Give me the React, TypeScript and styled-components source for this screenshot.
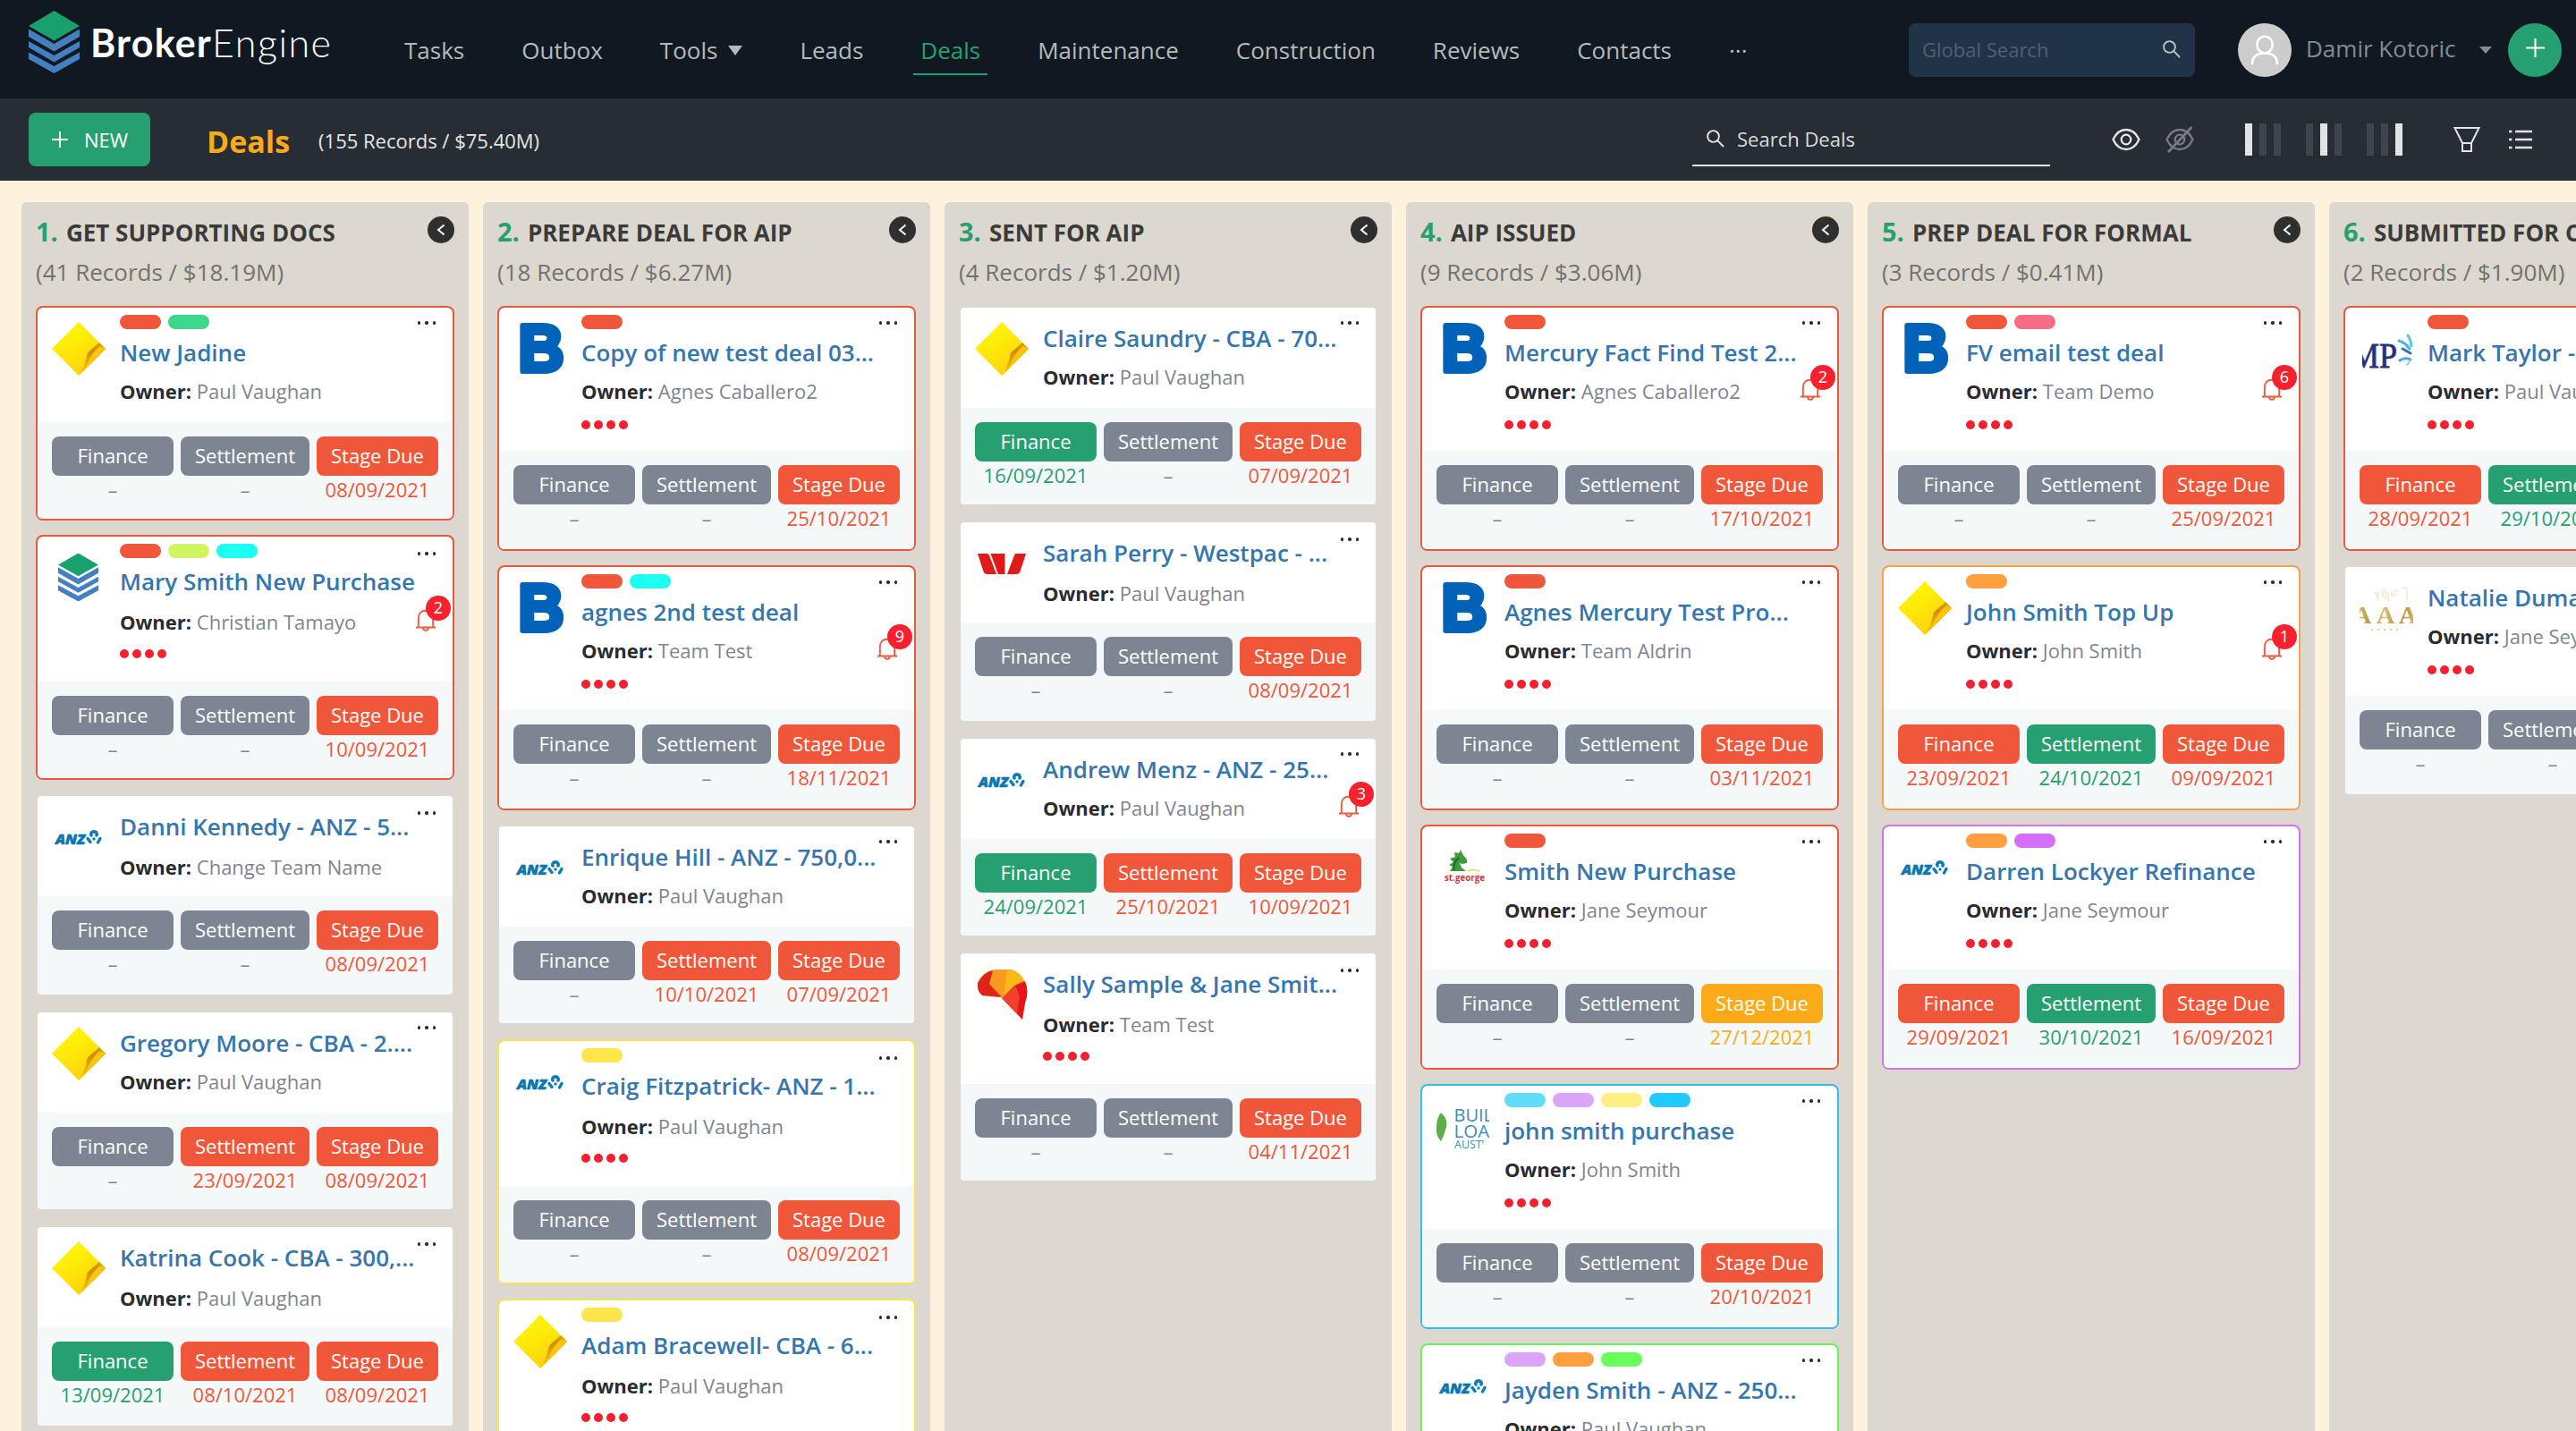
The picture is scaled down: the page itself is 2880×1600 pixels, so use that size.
import React from 'react';
import styled, { createGlobalStyle } from 'styled-components';

const C = {
  red: '#f0573a', green: '#26a071', gray: '#7d8592', amber: '#fbab18',
  mint: '#3dd788', lime: '#cff560', cyan: '#1afff2', sky: '#62dcfb', mauve: '#dca4f4',
  lemon: '#ffee80', blue: '#20caff', orange: '#ff9f3f', leaf: '#6afc5b', purple: '#d56ef8',
  pink: '#f66e85', yellow: '#ffe54c',
};

const Global = createGlobalStyle`
  * { box-sizing: border-box; }
  html, body { margin: 0; padding: 0; overflow: hidden; }
  body { font-family: "Open Sans", "Noto Sans", sans-serif; background: #fdf3dc; }
`;

const Page = styled.div`
  width: 2880px; height: 1600px; overflow: hidden;
  display: flex; flex-direction: column; background: #fdf3dc;
`;

/* ---------- top bar ---------- */
const TopBar = styled.header`
  flex: none; height: 110px; background: #101921; display: flex; align-items: flex-start; padding: 0 16px 0 32px;
`;
const Brand = styled.div`
  display: flex; width: 412px; padding-top: 12px; gap: 12px;
`;
const BrandName = styled.div`
  font-family: Lato, sans-serif; font-size: 43px; line-height: 50px; color: #fff; font-weight: 300;
  padding-top: 11px; letter-spacing: 1.5px; white-space: nowrap;
  b { font-weight: 700; letter-spacing: 1.2px; }
`;
const Nav = styled.nav`display: flex; align-items: flex-start; gap: 48px; padding-top: 38px; flex: 1;`;
const NavItem = styled.a<{ $active?: boolean }>`
  display: flex; align-items: center; gap: 12px; padding: 0 8px 8px;
  font-size: 26px; line-height: 36px;
  color: ${p => (p.$active ? C.green : '#b5b9bc')};
  border-bottom: 2px solid ${p => (p.$active ? C.green : 'transparent')};
`;
const Caret = styled.i<{ $small?: boolean }>`
  width: 0; height: 0; border-style: solid;
  border-width: ${p => (p.$small ? '8px 7px 0' : '11px 8px 0')};
  border-color: ${p => (p.$small ? '#858b90' : '#b5b9bc')} transparent transparent;
`;
const Right = styled.div`display: flex; align-items: center; padding-top: 26px;`;
const GlobalSearch = styled.div`
  width: 320px; height: 60px; border-radius: 8px; background: #203347; color: #52616f;
  display: flex; align-items: center; justify-content: space-between; padding: 0 16px 2px 15px; font-size: 22px;
`;
const Avatar = styled.div`
  width: 60px; height: 60px; border-radius: 50%; background: #ccc; margin-left: 48px;
  display: flex; align-items: center; justify-content: center;
`;
const UserName = styled.span`
  font-size: 26px; color: #858b90; margin: 0 24px 4px 16px; width: 170px; white-space: nowrap; line-height: 36px;
`;
const RoundAdd = styled.button`
  width: 60px; height: 60px; border-radius: 50%; background: ${C.green}; border: 0; padding: 0 0 6px; margin-left: 18px;
  display: flex; align-items: center; justify-content: center;
`;

/* ---------- toolbar ---------- */
const Toolbar = styled.div`
  flex: none; height: 92px; background: #272d34; display: flex; align-items: center; padding: 0 48px 0 32px;
`;
const NewButton = styled.button`
  width: 136px; height: 60px; border: 0; border-radius: 8px; background: ${C.green}; color: #fff;
  display: flex; align-items: center; gap: 18px; padding: 0 0 0 26px; font: 400 22px "Open Sans", sans-serif;
`;
const Title = styled.h1`margin: 0 0 0 63px; font-size: 34px; line-height: 46px; font-weight: 700; color: ${C.amber}; padding-top: 3px;`;
const Totals = styled.span`font-size: 22px; color: #e4e6e8; margin-left: 32px; padding-top: 2px; flex: 1;`;
const DealSearch = styled.div`
  width: 400px; height: 60px; border-bottom: 2px solid #e3e9ea; color: #d9dcde; font-size: 22px;
  display: flex; align-items: center; gap: 14px; padding: 0 0 0 16px;
`;
const Tools = styled.div`display: flex; align-items: center; margin-left: 69px;`;
const Bars = styled.div`display: flex; gap: 8px; margin-left: 28px; &:first-of-type { margin-left: 57px; }`;
const Bar = styled.i<{ $on: boolean }>`width: 8px; height: 36px; background: ${p => (p.$on ? '#dfe5e4' : '#3f454c')};`;
const IconGap = styled.span<{ $w: number }>`width: ${p => p.$w}px;`;

/* ---------- board ---------- */
const Board = styled.main`
  flex: 1; min-height: 0; display: flex; gap: 16px; padding: 24px 0 0 24px; overflow: hidden;
`;
const Column = styled.section`
  flex: none; width: 500px; background: #dcd8d0; border-radius: 6px 6px 0 0; padding: 16px 16px 0;
  display: flex; flex-direction: column;
`;
const ColumnHead = styled.div`display: flex; flex: none; justify-content: space-between; height: 40px;`;
const ColumnTitle = styled.h2`
  margin: -1px 0 0; font-size: 26px; font-weight: 700; color: #3b3b3a; line-height: 36px; white-space: nowrap;
  em { font-style: normal; font-size: 29px; color: ${C.green}; margin-right: 9px; }
`;
const Collapse = styled.button`
  flex: none; width: 30px; height: 30px; border-radius: 50%; border: 0; padding: 0; background: #2f2f2f;
  display: flex; align-items: center; justify-content: center;
`;
const ColumnSub = styled.div`flex: none; font-size: 26px; line-height: 36px; color: #72726f; height: 60px; padding-top: 4px; white-space: nowrap;`;
const Cards = styled.div`display: flex; flex-direction: column; gap: 16px;`;

const Card = styled.article<{ $edge?: string }>`
  flex: none; position: relative; border: 2px solid ${p => p.$edge || 'transparent'}; border-radius: ${p => (p.$edge ? 8 : 6)}px;
  background: #fff; background-clip: padding-box;
`;
const CardBody = styled.div<{ $tagged: boolean; $pb: number }>`
  display: flex; padding: ${p => (p.$tagged ? 8 : 15)}px 0 ${p => p.$pb}px 16px;
`;
const LogoBox = styled.div<{ $tagged: boolean }>`
  width: 60px; height: 60px; margin: ${p => (p.$tagged ? 8 : 1)}px 16px 0 0; flex: none;
  svg { display: block; }
`;
const Info = styled.div`flex: 1; min-width: 0; display: flex; flex-direction: column;`;
const Tags = styled.div`display: flex; gap: 8px; margin-bottom: 7px;`;
const Tag = styled.span<{ $c: string }>`width: 46px; height: 16px; border-radius: 8px; background: ${p => p.$c};`;
const DealName = styled.a`font-size: 26px; font-weight: 600; height: 36px; line-height: 38px; color: #3376b0; white-space: nowrap;`;
const OwnerRow = styled.div<{ $low?: boolean }>`
  margin: ${p => (p.$low ? '12px 0 -2px' : '10px 0 0')}; height: 32px; line-height: 32px; font-size: 22px; color: #7e8591;
  display: flex; justify-content: space-between; white-space: nowrap;
  b { color: #2b2b2b; font-weight: 700; }
`;
const Bell = styled.div`position: relative; width: 22px; height: 32px; margin-right: 19px; padding-top: 1px;`;
const Badge = styled.span`
  position: absolute; left: 11px; top: -13px; width: 28px; height: 28px; border-radius: 50%; background: #f5212f; color: #fff;
  font-size: 18px; line-height: 27px; text-align: center;
`;
const Dots = styled.div`
  display: flex; gap: 4px; margin-top: 17px;
  i { width: 10px; height: 10px; border-radius: 50%; background: #f4202d; }
`;
const Menu = styled.div<{ $low?: boolean }>`
  position: absolute; right: 19px; top: ${p => (p.$low ? 17 : 15)}px; display: flex; gap: 5px;
  i { width: 3.5px; height: 3.5px; border-radius: 50%; background: #2a2a2a; }
`;
const CardFoot = styled.div<{ $pb: number }>`
  background: #f5f8f9; display: flex; gap: 8px; padding: 16px 16px ${p => p.$pb}px; border-radius: 0 0 5px 5px;
`;
const Milestone = styled.div<{ $w: number }>`width: ${p => p.$w}px; text-align: center; font-size: 22px;`;
const Pill = styled.div<{ $c: string }>`height: 44px; line-height: 43px; border-radius: 8px; color: #fff; background: ${p => p.$c};`;
const DateText = styled.div<{ $c: string }>`height: 32px; line-height: 30px; color: ${p => p.$c};`;

/* ---------- icons ---------- */
const Search = ({ c, s = 20 }: { c: string; s?: number }) => (
  <svg width={s} height={s} viewBox="0 0 20 20" fill="none" stroke={c} strokeWidth="1.900"><circle cx="7.5" cy="7.5" r="6.400" /><path d="M12.200 12.200 19 19" /></svg>
);
const Plus = ({ s }: { s: number }) => (
  <svg width={s} height={s} viewBox="0 0 20 20" stroke="#fff" strokeWidth="2"><path d="M10 0V20M0 10H20" /></svg>
);
const Eye = ({ off }: { off?: boolean }) => (
  <svg width="32" height="32" viewBox="0 0 32 32" fill="none" stroke={off ? '#767c82' : '#e3e7ea'} strokeWidth="2.3">
    <path d="M1.5 16C5 8.500 10 5 16 5s11 3.500 14.500 11C27 23.500 22 27 16 27S5 23.500 1.500 16Z" />
    <circle cx="16" cy="16" r="5.3" />
    {off && <path d="M29.500 2 3 30" strokeWidth="2.800" />}
  </svg>
);
const BellIcon = () => (
  <svg width="22" height="26" viewBox="0 0 22 26" fill="none" stroke="#ee5a3c" strokeWidth="1.900">
    <path d="M0 21.500H22M2.800 21.500V11C2.800 5.500 6 2.800 11 2.800S19.200 5.500 19.200 11V21.500M8 21.500C8 26 14 26 14 21.500" />
  </svg>
);

/* ---------- lender logos ---------- */
const Stack = ({ w, h }: { w: number; h: number }) => (
  <svg width={w} height={h} viewBox="0 0 57 70" preserveAspectRatio="none">
    <path d="M28.500 0 57 17 28.500 33.500 0 17Z" fill="#18a06d" />
    <g fill="#4480bf">
      <path d="M0 20.500 28.500 37 57 20.500V29L28.500 45.500 0 29Z" />
      <path d="M0 34 28.500 50 57 34V41L28.500 57.500 0 41Z" />
      <path d="M0 46.500 28.500 62 57 46.500V54L28.500 70 0 54Z" />
    </g>
  </svg>
);
const Cba = () => (
  <svg width="60" height="60" viewBox="0 0 60 60">
    <defs>
      <linearGradient id="cbaA" x1="0" y1="0" x2="0.6" y2="1"><stop offset="0" stopColor="#fff700" /><stop offset=".4" stopColor="#ffee08" /><stop offset="1" stopColor="#ffd00e" /></linearGradient>
      <linearGradient id="cbaB" x1="0" y1="1" x2="1" y2="0"><stop offset="0" stopColor="#ffd000" /><stop offset=".6" stopColor="#d08c00" /><stop offset="1" stopColor="#e0a000" /></linearGradient>
    </defs>
    <path d="M30 0 60 30 30 60 0 30Z" fill="url(#cbaA)" />
    <path d="M53 23 60 30 30 60C36 52 37 46 39 38 40 33 42 33 53 23Z" fill="url(#cbaB)" />
    <path d="M54 27 60 30 35 55C42 45 40 39 54 27Z" fill="#fdc60c" />
  </svg>
);
const Bank = () => (
  <svg width="60" height="60" viewBox="0 0 60 60" overflow="visible">
    <text x="5.500" y="55" fontFamily="Liberation Sans, Arial, sans-serif" fontWeight="700" fontSize="74" textLength="51" lengthAdjust="spacingAndGlyphs" fill="#0062b9" stroke="#0062b9" strokeWidth="6" strokeLinejoin="round">B</text>
  </svg>
);
const Anz = () => (
  <svg width="60" height="60" viewBox="0 0 60 60">
    <text x="4" y="38" fontFamily="Open Sans, sans-serif" fontWeight="800" fontStyle="italic" fontSize="16" textLength="33" lengthAdjust="spacingAndGlyphs" fill="#0a76b2" stroke="#0a76b2" strokeWidth=".6">ANZ</text>
    <g fill="none" stroke="#0a7cb8" strokeLinecap="round">
      <path d="M44 28C42 22.500 52 22.500 50 28" strokeWidth="3.600" /><path d="M40 31.500 43 35.500M54 31.500 51.500 36" strokeWidth="3.400" />
    </g>
    <circle cx="47" cy="32" r="1.700" fill="#0a7cb8" />
  </svg>
);
const Westpac = () => (
  <svg width="60" height="60" viewBox="0 0 60 60" fill="#e01a18">
    <path d="M3 19H13Q15 19 16 21L24 42H14Q10.500 42 9.500 39Z" /><path d="M17.500 19H33.500V42H26Z" /><path d="M57 19H46Q44.500 19 44 21L36 42H46Q49.500 42 50.500 39Z" />
  </svg>
);
const Fan = () => (
  <svg width="60" height="60" viewBox="0 0 60 60">
    <path d="M3 17Q9 3 24 2H40Q50 4 56 16L44 20 30 33 8 31Q2 26 3 17Z" fill="#f79a1e" />
    <path d="M3 17Q10 5 20 3L16 18 30 33 8 31Q2 26 3 17Z" fill="#e2231a" />
    <path d="M36 2Q50 3 55 14L44 20 32 32 Z" fill="#fdb81a" />
    <path d="M56 15Q61 26 56 40L53 58 30 34 44 20Z" fill="#e4161b" />
    <path d="M30 34 45 20 50 32 47 51Z" fill="#f4402a" />
  </svg>
);
const StGeorge = () => (
  <svg width="60" height="60" viewBox="0 0 60 60">
    <path d="M15 34 18 29 14 27 19 24 15 20 21 18 20 13 25 14 27 10 29 15 34 21 34 25 29 26 26 25 28 30 33 34Z" fill="#3f9a3a" />
    <path d="M20 33Q18 24 25 19" stroke="#1f5e2a" strokeWidth="1.600" fill="none" />
    <path d="M35 34Q41 31 48 34" stroke="#f3d23c" strokeWidth="1.600" fill="none" />
    <text x="9" y="45" fontFamily="Open Sans, sans-serif" fontWeight="700" fontSize="11" textLength="45" lengthAdjust="spacingAndGlyphs" fill="#d9323c">st.george</text>
  </svg>
);
const BuildLoans = () => (
  <svg width="59" height="60" viewBox="0 0 59 60" fill="#3d8db8" fontFamily="Open Sans, sans-serif">
    <path d="M5 14Q13 21 11 30 9 38 5 46-1 40 0 30 0 20 5 14Z" fill="#5fae4b" />
    <text x="19.500" y="23.500" fontSize="20">BUIL</text>
    <text x="19.500" y="41.500" fontSize="20.500">LOA</text>
    <text x="20" y="54" fontSize="12.500">AUST’</text>
  </svg>
);
const Mp = () => (
  <svg width="60" height="60" viewBox="0 0 60 60">
    <text x="-10" y="51" fontFamily="Liberation Serif, serif" fontSize="40" fill="#27307a" stroke="#27307a" strokeWidth=".8" textLength="52" lengthAdjust="spacingAndGlyphs">MP</text>
    <path d="M-1 20H3L3 52H-1Z" fill="#fff" />
    <g fill="none" strokeWidth="3" strokeLinecap="round">
      <path d="M58 27Q57 19 54 15" stroke="#5fc4e8" /><path d="M56 30Q51 23 44 21" stroke="#49b3e6" />
      <path d="M57 35Q52 32 48 30" stroke="#2f6fc0" /><path d="M45 43Q50 39 57 42" stroke="#49a9dc" /><path d="M53 48 57 43" stroke="#7fd0ee" strokeWidth="2" />
    </g>
  </svg>
);
const Aaa = () => (
  <svg width="60" height="60" viewBox="0 0 60 60">
    <defs><linearGradient id="gold" x1="0" x2="1"><stop offset="0" stopColor="#e6cf8e" /><stop offset=".3" stopColor="#b08a2c" /><stop offset=".5" stopColor="#dcc27a" /><stop offset=".7" stopColor="#a8801f" /><stop offset="1" stopColor="#dcc27a" /></linearGradient></defs>
    <path d="M16 14 19 12V20M21 22V12H23M26 8V18M29 8V20M32 12V22M36 10V16H40V10H44M47 7H53V20" stroke="#ecdcb6" strokeWidth="1" fill="none" />
    <text y="47" fontFamily="Liberation Serif, serif" fontSize="28" fontWeight="700" fill="url(#gold)"><tspan x="-7">A</tspan><tspan x="19">A</tspan><tspan x="44">A</tspan></text>
    <path d="M13 54H48" stroke="#e3d2a4" strokeWidth="2" strokeDasharray="2 5" />
  </svg>
);
const StackLogo = () => (
  <svg width="60" height="60" viewBox="0 0 60 60"><svg x="7" y="2.500" width="45" height="54"><Stack w={45} h={54} /></svg></svg>
);
const logos: Record<string, () => React.JSX.Element> = {
  cba: Cba, bank: Bank, anz: Anz, westpac: Westpac, fan: Fan, george: StGeorge, build: BuildLoans, mp: Mp, aaa: Aaa, stack: StackLogo,
};

/* ---------- data ---------- */
type Stage = [string, string] | null;
interface Deal {
  logo: string; name: string; owner: string; tags?: string[]; edge?: string; dots?: boolean; low?: boolean; alerts?: number;
  stages: [Stage, Stage, Stage];
}
const r = (d: string): Stage => [C.red, d];
const g = (d: string): Stage => [C.green, d];
const E = { red: '#e8583f', yellow: '#f7e258', blue: '#31c0ea', leaf: '#69f25c', orange: '#f9a146', purple: '#cf73ee' };

const columns: { title: string; sub: string; deals: Deal[] }[] = [
  { title: 'GET SUPPORTING DOCS', sub: '(41 Records / $18.19M)', deals: [
    { logo: 'cba', name: 'New Jadine', owner: 'Paul Vaughan', tags: [C.red, C.mint], edge: E.red, stages: [null, null, r('08/09/2021')] },
    { logo: 'stack', name: 'Mary Smith New Purchase', owner: 'Christian Tamayo', tags: [C.red, C.lime, C.cyan], edge: E.red, dots: true, low: true, alerts: 2, stages: [null, null, r('10/09/2021')] },
    { logo: 'anz', name: 'Danni Kennedy - ANZ - 5...', owner: 'Change Team Name', low: true, stages: [null, null, r('08/09/2021')] },
    { logo: 'cba', name: 'Gregory Moore - CBA - 2....', owner: 'Paul Vaughan', stages: [null, r('23/09/2021'), r('08/09/2021')] },
    { logo: 'cba', name: 'Katrina Cook - CBA - 300,...', owner: 'Paul Vaughan', low: true, stages: [g('13/09/2021'), r('08/10/2021'), r('08/09/2021')] },
  ] },
  { title: 'PREPARE DEAL FOR AIP', sub: '(18 Records / $6.27M)', deals: [
    { logo: 'bank', name: 'Copy of new test deal 03...', owner: 'Agnes Caballero2', tags: [C.red], edge: E.red, dots: true, stages: [null, null, r('25/10/2021')] },
    { logo: 'bank', name: 'agnes 2nd test deal', owner: 'Team Test', tags: [C.red, C.cyan], edge: E.red, dots: true, alerts: 9, stages: [null, null, r('18/11/2021')] },
    { logo: 'anz', name: 'Enrique Hill - ANZ - 750,0...', owner: 'Paul Vaughan', stages: [null, r('10/10/2021'), r('07/09/2021')] },
    { logo: 'anz', name: 'Craig Fitzpatrick- ANZ - 1...', owner: 'Paul Vaughan', tags: [C.yellow], edge: E.yellow, dots: true, low: true, stages: [null, null, r('08/09/2021')] },
    { logo: 'cba', name: 'Adam Bracewell- CBA - 6...', owner: 'Paul Vaughan', tags: [C.yellow], edge: E.yellow, dots: true, low: true, stages: [null, null, r('08/09/2021')] },
  ] },
  { title: 'SENT FOR AIP', sub: '(4 Records / $1.20M)', deals: [
    { logo: 'cba', name: 'Claire Saundry - CBA - 70...', owner: 'Paul Vaughan', stages: [g('16/09/2021'), null, r('07/09/2021')] },
    { logo: 'westpac', name: 'Sarah Perry - Westpac - ...', owner: 'Paul Vaughan', low: true, stages: [null, null, r('08/09/2021')] },
    { logo: 'anz', name: 'Andrew Menz - ANZ - 25...', owner: 'Paul Vaughan', alerts: 3, stages: [g('24/09/2021'), r('25/10/2021'), r('10/09/2021')] },
    { logo: 'fan', name: 'Sally Sample & Jane Smit...', owner: 'Team Test', dots: true, low: true, stages: [null, null, r('04/11/2021')] },
  ] },
  { title: 'AIP ISSUED', sub: '(9 Records / $3.06M)', deals: [
    { logo: 'bank', name: 'Mercury Fact Find Test 2...', owner: 'Agnes Caballero2', tags: [C.red], edge: E.red, dots: true, alerts: 2, stages: [null, null, r('17/10/2021')] },
    { logo: 'bank', name: 'Agnes Mercury Test Pro...', owner: 'Team Aldrin', tags: [C.red], edge: E.red, dots: true, stages: [null, null, r('03/11/2021')] },
    { logo: 'george', name: 'Smith New Purchase', owner: 'Jane Seymour', tags: [C.red], edge: E.red, dots: true, stages: [null, null, [C.amber, '27/12/2021']] },
    { logo: 'build', name: 'john smith purchase', owner: 'John Smith', tags: [C.sky, C.mauve, C.lemon, C.blue], edge: E.blue, dots: true, stages: [null, null, r('20/10/2021')] },
    { logo: 'anz', name: 'Jayden Smith - ANZ - 250...', owner: 'Paul Vaughan', tags: [C.mauve, C.orange, C.leaf], edge: E.leaf, dots: true, stages: [null, null, null] },
  ] },
  { title: 'PREP DEAL FOR FORMAL', sub: '(3 Records / $0.41M)', deals: [
    { logo: 'bank', name: 'FV email test deal', owner: 'Team Demo', tags: [C.red, C.pink], edge: E.red, dots: true, alerts: 6, stages: [null, null, r('25/09/2021')] },
    { logo: 'cba', name: 'John Smith Top Up', owner: 'John Smith', tags: [C.orange], edge: E.orange, dots: true, alerts: 1, stages: [r('23/09/2021'), g('24/10/2021'), r('09/09/2021')] },
    { logo: 'anz', name: 'Darren Lockyer Refinance', owner: 'Jane Seymour', tags: [C.orange, C.purple], edge: E.purple, dots: true, stages: [r('29/09/2021'), g('30/10/2021'), r('16/09/2021')] },
  ] },
  { title: 'SUBMITTED FOR CREDIT', sub: '(2 Records / $1.90M)', deals: [
    { logo: 'mp', name: 'Mark Taylor - ANZ', owner: 'Paul Vaughan', tags: [C.red], edge: E.red, dots: true, stages: [r('28/09/2021'), g('29/10/2021'), r('08/09/2021')] },
    { logo: 'aaa', name: 'Natalie Dumas', owner: 'Jane Seymour', dots: true, stages: [null, null, null] },
  ] },
];

const stageNames: [string, number][] = [['Finance', 136], ['Settlement', 144], ['Stage Due', 136]];

function DealCard({ d }: { d: Deal }) {
  const Logo = logos[d.logo];
  const tagged = !!d.tags;
  const bodyPad = d.dots ? (d.low ? 26 : 24) : 19;
  const footPad = d.dots ? (d.low ? 16 : 18) : (d.low ? 18 : 16);
  return (
    <Card $edge={d.edge}>
      <Menu $low={d.low}><i /><i /><i /></Menu>
      <CardBody $tagged={tagged} $pb={bodyPad}>
        <LogoBox $tagged={tagged}><Logo /></LogoBox>
        <Info>
          {d.tags && <Tags>{d.tags.map((t, i) => <Tag key={i} $c={t} />)}</Tags>}
          <DealName>{d.name}</DealName>
          <OwnerRow $low={d.low}>
            <span><b>Owner:</b> {d.owner}</span>
            {d.alerts && <Bell><BellIcon /><Badge>{d.alerts}</Badge></Bell>}
          </OwnerRow>
          {d.dots && <Dots><i /><i /><i /><i /></Dots>}
        </Info>
      </CardBody>
      <CardFoot $pb={footPad}>
        {stageNames.map(([n, w], i) => {
          const s = d.stages[i];
          return (
            <Milestone key={n} $w={w}>
              <Pill $c={s ? s[0] : C.gray}>{n}</Pill>
              <DateText $c={s ? s[0] : C.gray}>{s ? s[1] : '–'}</DateText>
            </Milestone>
          );
        })}
      </CardFoot>
    </Card>
  );
}

export default function App() {
  return (
    <Page>
      <Global />
      <TopBar>
        <Brand><Stack w={57} h={70} /><BrandName><b>Broker</b>Engine</BrandName></Brand>
        <Nav>
          <NavItem>Tasks</NavItem><NavItem>Outbox</NavItem><NavItem>Tools <Caret /></NavItem><NavItem>Leads</NavItem>
          <NavItem $active>Deals</NavItem><NavItem>Maintenance</NavItem><NavItem>Construction</NavItem>
          <NavItem>Reviews</NavItem><NavItem>Contacts</NavItem><NavItem>···</NavItem>
        </Nav>
        <Right>
          <GlobalSearch>Global Search <Search c="#bcc4ca" /></GlobalSearch>
          <Avatar>
            <svg width="32" height="34" viewBox="0 0 32 34" fill="none" stroke="#fff" strokeWidth="2.600"><ellipse cx="16" cy="11" rx="8.700" ry="9.300" /><path d="M2 33C2 24 8 20.500 16 20.500S30 24 30 33" /></svg>
          </Avatar>
          <UserName>Damir Kotoric</UserName>
          <Caret $small />
          <RoundAdd><Plus s={21} /></RoundAdd>
        </Right>
      </TopBar>
      <Toolbar>
        <NewButton><Plus s={18} />NEW</NewButton>
        <Title>Deals</Title>
        <Totals>(155 Records / $75.40M)</Totals>
        <DealSearch><Search c="#e3e7ea" />Search Deals</DealSearch>
        <Tools>
          <Eye /><IconGap $w={28} /><Eye off />
          {[0, 1, 2].map(n => <Bars key={n}>{[0, 1, 2].map(k => <Bar key={k} $on={k === n} />)}</Bars>)}
          <IconGap $w={57} />
          <svg width="30" height="30" viewBox="0 0 30 30" fill="none" stroke="#dfe3ee" strokeWidth="2"><path d="M1.500 2H28.500L20 19H10Z M10 19H20V28H10Z" /></svg>
          <IconGap $w={32} />
          <svg width="27" height="24" viewBox="0 0 27 24" stroke="#dfe3ee" strokeWidth="2.400"><path d="M0 3H3.500M0 12H3.500M0 21H3.500M7 3H26M7 12H26M7 21H26" /></svg>
        </Tools>
      </Toolbar>
      <Board>
        {columns.map((c, i) => (
          <Column key={c.title}>
            <ColumnHead>
              <ColumnTitle><em>{i + 1}.</em>{c.title}</ColumnTitle>
              <Collapse>
                <svg width="12" height="14" viewBox="0 0 12 14" fill="none" stroke="#fff" strokeWidth="2"><path d="M9.500 1.500 3 7 9.500 12.500" /></svg>
              </Collapse>
            </ColumnHead>
            <ColumnSub>{c.sub}</ColumnSub>
            <Cards>{c.deals.map(d => <DealCard key={d.name} d={d} />)}</Cards>
          </Column>
        ))}
      </Board>
    </Page>
  );
}
